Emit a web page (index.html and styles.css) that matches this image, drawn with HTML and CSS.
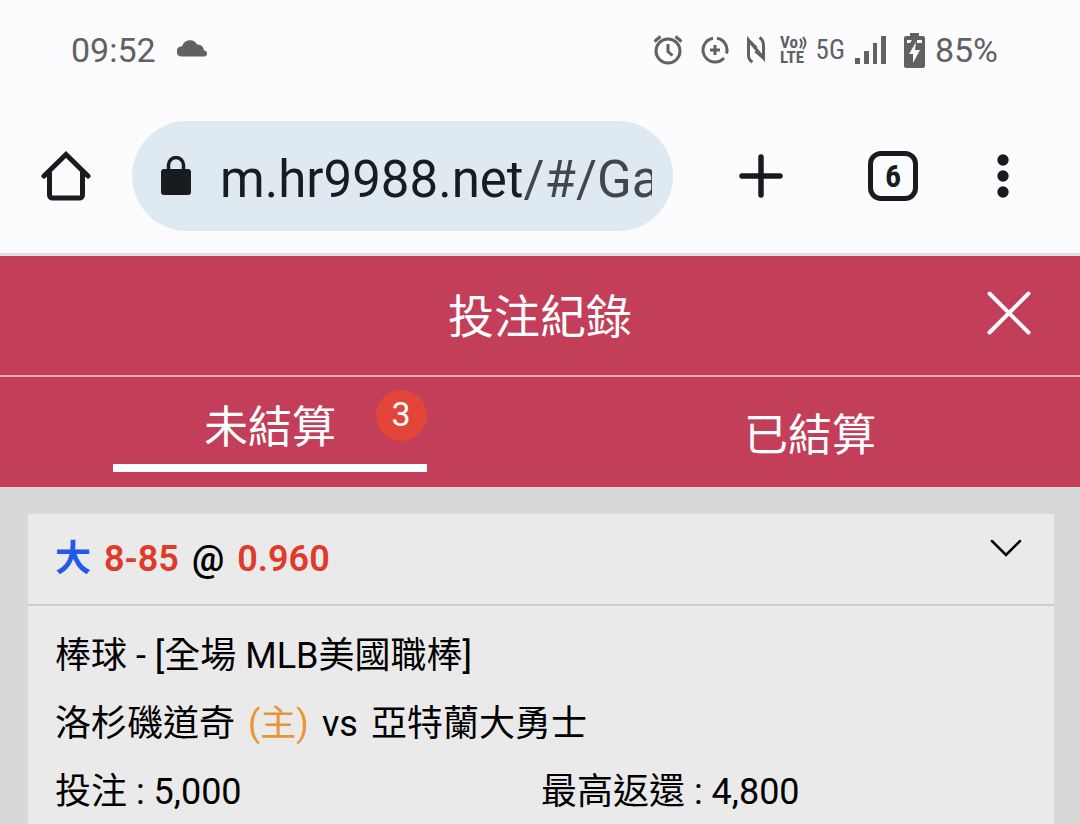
FILE: index.html
```
<!DOCTYPE html>
<html lang="zh-Hant">
<head>
  <meta charset="utf-8">
  <meta name="viewport" content="width=device-width, initial-scale=1">
  <title>投注紀錄</title>
  <link rel="stylesheet" href="styles.css">
</head>

<body>

<!-- phone status bar -->
<div class="status-bar">
  <span>09:52</span>
  <svg class="cloud" width="30" height="18" viewBox="0 0 30 18">
    <path d="M5 17.500A5 5 0 0 1 4 7.500Q5 7 5.500 6.500A8 8 0 0 1 20 5.500Q26 5 27 11.500A3 3 0 0 1 27 17.500z"/>
  </svg>
  <div class="status-icons">
    <svg class="alarm" width="30" height="30" viewBox="0 0 30 30" fill="none" stroke="#616161" stroke-width="3">
      <circle cx="15" cy="16" r="12"/>
      <path d="M15 9v7.500l4.500 4M1.500 6.500l6-5M28.500 6.500l-6-5"/>
    </svg>
    <svg class="saver" width="28" height="28" viewBox="0 0 28 28" fill="none" stroke="#616161" stroke-width="3">
      <path d="M16 2.200A12 12 0 0 1 25.500 17.500M23 22A12 12 0 1 1 12 2.200"/>
      <path d="M14 9v10M9 14h10"/>
    </svg>
    <svg class="nfc" width="18" height="28" viewBox="0 0 18 28" fill="none" stroke="#616161" stroke-width="3">
      <path d="M5.500 26Q1.500 24 1.500 19V4L16.500 22V10Q16.500 4 12.500 1.500M1.500 4l8 8M8.500 15l8 7"/>
    </svg>
    <svg class="volte" width="30" height="30" viewBox="0 0 30 30">
      <text x="0" y="13">Vo</text>
      <text x="0" y="28">LTE</text>
      <path d="M20 4q3.500 4 0 9M23 2q5 6 0 12" fill="none" stroke="#616161" stroke-width="2"/>
    </svg>
    <span class="network">5G</span>
    <svg class="signal" width="31" height="28" viewBox="0 0 31 28">
      <path d="M0 22h5v6H0zM9 15h5v13H9zM18 7h4v21h-4zM26 0h5v28h-5z"/>
    </svg>
    <svg class="battery" width="21" height="35" viewBox="0 0 21 35">
      <path d="M6 0h9v3h4a2 2 0 0 1 2 2v28a2 2 0 0 1-2 2H2a2 2 0 0 1-2-2V5a2 2 0 0 1 2-2h4z"/>
      <path d="M3 7h5l-2 3H3zM13 7h5v3h-5zM12 9l-7 12h4v9l7-13h-5z" fill="#fcfcff"/>
    </svg>
    <span>85%</span>
  </div>
</div>

<!-- browser toolbar -->
<div class="toolbar">
  <button class="icon-btn" aria-label="Home">
    <svg width="50" height="50" viewBox="0 0 50 50" fill="none" stroke="#191c1e" stroke-width="5" stroke-linecap="round" stroke-linejoin="round">
      <path d="M3 25L25 3.500 47 25" stroke-linejoin="miter"/>
      <path d="M8.500 21v23a3 3 0 0 0 3 3h27a3 3 0 0 0 3-3V21"/>
    </svg>
  </button>
  <a class="address" href="#">
    <svg class="lock" width="30" height="40" viewBox="0 0 30 40">
      <rect x="0" y="13" width="30" height="26" rx="3" fill="#191c1e"/>
      <path d="M7.500 14V9a7.500 7.500 0 0 1 15 0v5" fill="none" stroke="#191c1e" stroke-width="3.500"/>
    </svg>
    <span class="url">m.hr9988.net<span class="path">/#/Ga</span></span>
  </a>
  <div class="actions">
    <button class="icon-btn" aria-label="New tab">
      <svg width="44" height="44" viewBox="0 0 44 44" stroke="#191c1e" stroke-width="5.500" stroke-linecap="round">
        <path d="M22 3v38M3 22h38"/>
      </svg>
    </button>
    <button class="tab-count" aria-label="Open tabs">6</button>
    <button class="icon-btn" aria-label="Menu">
      <svg width="12" height="44" viewBox="0 0 12 44" fill="#191c1e">
        <circle cx="6" cy="6" r="5.700"/>
        <circle cx="6" cy="22" r="5.700"/>
        <circle cx="6" cy="38" r="5.700"/>
      </svg>
    </button>
  </div>
</div>

<!-- page title -->
<div class="header">
  <h1 class="title">投注紀錄</h1>
  <button class="icon-btn close" aria-label="關閉">
    <svg width="44" height="44" viewBox="0 0 44 44" stroke="#ffffff" stroke-width="4" stroke-linecap="round">
      <path d="M2.500 2.500l39 39M41.500 2.500l-39 39"/>
    </svg>
  </button>
</div>

<div class="tabs">
  <div class="tab-cell">
    <button class="tab active">未結算<span class="badge">3</span></button>
  </div>
  <div class="tab-cell">
    <button class="tab">已結算</button>
  </div>
</div>

<!-- bet list -->
<div class="bets">
  <div class="card">
    <div class="card-head">
      <div class="pick">
        <span class="blue">大</span>
        <span class="red">8-85</span>
        <span>@</span>
        <span class="red">0.960</span>
      </div>
      <button class="icon-btn" aria-label="展開">
        <svg width="32" height="18" viewBox="0 0 32 18" fill="none" stroke="#000000" stroke-width="2.500">
          <path d="M2 2l14 14L30 2" stroke-linecap="round"/>
        </svg>
      </button>
    </div>
    <div class="card-body">
      <div>棒球 - [全場 MLB美國職棒]</div>
      <div class="match">
        <span>洛杉磯道奇</span>
        <span class="home">(主)</span>
        <span>vs</span>
        <span>亞特蘭大勇士</span>
      </div>
      <div class="amounts">
        <span>投注 : 5,000</span>
        <span>最高返還 : 4,800</span>
      </div>
    </div>
  </div>
</div>

</body>
</html>
```
FILE: styles.css
```
* {
  box-sizing: border-box;
}

body {
  margin: 0;
  min-height: 100vh;
  background-color: #d8d8d8;
  color: #000000;
  font-family: Roboto, "Noto Sans CJK TC", sans-serif;
}

button {
  padding: 0;
  border: 0;
  background: none;
  color: inherit;
  font: inherit;
  cursor: pointer;
}

svg {
  display: block;
  flex: none;
}

.icon-btn {
  display: block;
}

/* Status bar */
.status-bar {
  display: flex;
  align-items: center;
  height: 100px;
  padding: 0 82px 0 71px;
  background-color: #fcfcff;
  color: #616161;
  fill: #616161;
  font-size: 34px;
}

.cloud {
  margin: 0 0 4px 21px;
}

.status-icons {
  display: flex;
  align-items: center;
  margin-left: auto;
}

.saver,
.nfc {
  margin-left: 18px;
}

.volte {
  margin-left: 15px;
  overflow: visible;
  font-family: "Roboto Condensed", Roboto, sans-serif;
  font-size: 17px;
  font-weight: bold;
}

.network {
  margin-left: 6px;
  font-family: "Roboto Condensed", Roboto, sans-serif;
  font-size: 27px;
}

.signal {
  margin-left: 10px;
}

.battery {
  margin: 0 10px 0 18px;
}

/* Browser toolbar */
.toolbar {
  display: flex;
  align-items: center;
  height: 156px;
  padding: 0 71px 2px 41px;
  border-bottom: 3px solid #dfe0e5;
  background-color: #fcfcff;
}

.address {
  display: flex;
  flex: 1;
  align-items: center;
  min-width: 0;
  height: 110px;
  margin: 0 66px 0 41px;
  padding: 0 21px 0 29px;
  border-radius: 55px;
  background-color: #dfe9f1;
  color: #191c1e;
  text-decoration: none;
}

.url {
  flex: 1;
  margin-left: 29px;
  padding-top: 8px;
  overflow: hidden;
  font-size: 51px;
  line-height: 64px;
  white-space: nowrap;
}

.path {
  color: #42474e;
}

.actions {
  display: flex;
  align-items: center;
}

.tab-count {
  width: 50px;
  height: 50px;
  margin: 0 79px 0 85px;
  border: 5px solid #191c1e;
  border-radius: 13px;
  color: #191c1e;
  font-family: "Roboto Condensed", Roboto, sans-serif;
  font-size: 32px;
  font-weight: bold;
  line-height: 38px;
}

/* Page header */
.header {
  display: grid;
  grid-template-columns: 1fr auto 1fr;
  align-items: center;
  height: 121px;
  padding: 0 49px 6px;
  border-bottom: 2px solid #efa9b8;
  background-color: #c33e59;
  color: #ffffff;
}

.title {
  grid-column: 2;
  margin: 0;
  font-size: 46px;
  font-weight: normal;
}

.close {
  justify-self: end;
}

/* Tabs */
.tabs {
  display: grid;
  grid-template-columns: 1fr 1fr;
  height: 110px;
  background-color: #c33e59;
  color: #ffffff;
}

.tab-cell {
  display: flex;
  align-items: center;
  justify-content: center;
}

.tab {
  position: relative;
  width: 58%;
  padding-top: 8px;
  font-size: 44px;
  line-height: 72px;
}

.active {
  padding-top: 0;
  border-bottom: 8px solid #ffffff;
}

.badge {
  position: absolute;
  top: -2px;
  right: 0;
  width: 51px;
  height: 51px;
  border-radius: 50%;
  background-color: #e4453a;
  font-size: 34px;
  line-height: 49px;
}

/* Bet cards */
.bets {
  padding: 27px 26px 0 28px;
}

.card {
  background-color: #eaeaea;
  font-size: 36px;
}

.card-head {
  display: flex;
  align-items: flex-start;
  justify-content: space-between;
  height: 92px;
  padding: 25px 32px 0 27px;
  border-bottom: 2px solid #cccccc;
}

.pick,
.match {
  display: flex;
  align-items: baseline;
  gap: 13px;
}

.pick {
  font-weight: 600;
  line-height: 40px;
}

.blue {
  color: #2259e8;
}

.red {
  color: #e03a2b;
}

.card-body {
  padding: 16px 27px;
  line-height: 68px;
}

.home {
  color: #e99535;
}

.amounts {
  display: grid;
  grid-template-columns: 1fr 1fr;
}
```
